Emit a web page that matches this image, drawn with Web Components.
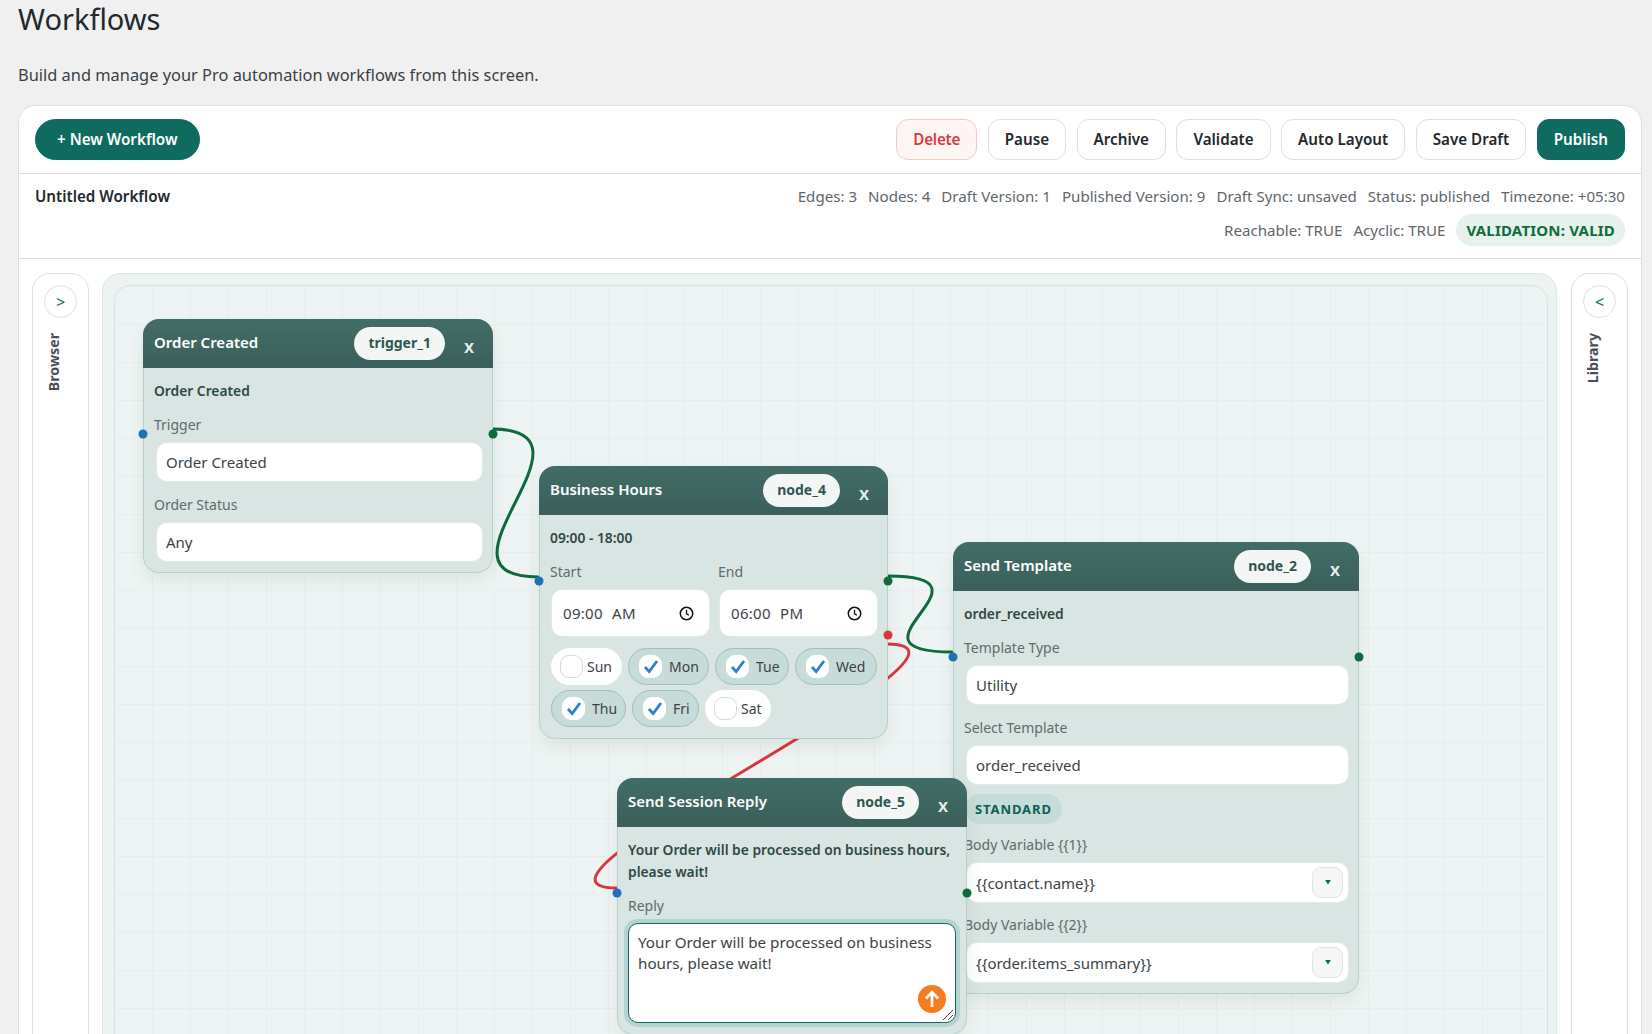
<!DOCTYPE html>
<html lang="en">
<head>
<meta charset="utf-8">
<title>Workflows</title>
<style>
  html, body { margin: 0; height: 100%; overflow: hidden; background: #f0f0f0; }
  body { font-family: "Noto Sans", "Open Sans", sans-serif; color: #23282c; }
</style>
</head>
<body>
<wf-page>
  <wf-card>
    <wf-toolbar>
      <wf-button slot="start" kind="primary" pill>+ New Workflow</wf-button>
      <wf-button kind="danger">Delete</wf-button>
      <wf-button>Pause</wf-button>
      <wf-button>Archive</wf-button>
      <wf-button>Validate</wf-button>
      <wf-button>Auto Layout</wf-button>
      <wf-button>Save Draft</wf-button>
      <wf-button kind="primary">Publish</wf-button>
    </wf-toolbar>
    <wf-meta name="Untitled Workflow">
      <span>Edges: 3</span><span>Nodes: 4</span><span>Draft Version: 1</span><span>Published Version: 9</span><span>Draft Sync: unsaved</span><span>Status: published</span><span>Timezone: +05:30</span>
      <span slot="second">Reachable: TRUE</span><span slot="second">Acyclic: TRUE</span>
      <wf-status slot="second">VALIDATION: VALID</wf-status>
    </wf-meta>
    <wf-workspace>
      <wf-rail slot="left" label="Browser" arrow="&gt;"></wf-rail>
      <wf-canvas>
        <wf-edge x1="377" y1="143" x2="423" y2="291" color="#0f6a3e" bend="120"></wf-edge>
        <wf-edge x1="773" y1="290" x2="837" y2="366" color="#0f6a3e" bend="120"></wf-edge>
        <wf-edge x1="772" y1="358" x2="502" y2="602" color="#d9383e" bend="135"></wf-edge>

        <wf-node heading="Order Created" badge="trigger_1" left="28" top="33" width="350">
          <wf-summary>Order Created</wf-summary>
          <wf-field label="Trigger"><wf-input>Order Created</wf-input></wf-field>
          <wf-field label="Order Status" gap="14"><wf-input>Any</wf-input></wf-field>
        </wf-node>

        <wf-node heading="Business Hours" badge="node_4" left="424" top="180" width="349" error-port="169">
          <wf-summary>09:00 - 18:00</wf-summary>
          <wf-times>
            <wf-field label="Start"><wf-input type="time">09:00 AM</wf-input></wf-field>
            <wf-field label="End"><wf-input type="time">06:00 PM</wf-input></wf-field>
          </wf-times>
          <wf-days>
            <wf-day width="71">Sun</wf-day><wf-day width="81" checked>Mon</wf-day><wf-day width="74" checked>Tue</wf-day><wf-day width="82" checked>Wed</wf-day>
            <wf-day width="75" checked>Thu</wf-day><wf-day width="67" checked>Fri</wf-day><wf-day width="66">Sat</wf-day>
          </wf-days>
        </wf-node>

        <wf-node heading="Send Template" badge="node_2" left="838" top="256" width="406">
          <wf-summary>order_received</wf-summary>
          <wf-field label="Template Type"><wf-input>Utility</wf-input></wf-field>
          <wf-field label="Select Template" gap="14"><wf-input>order_received</wf-input></wf-field>
          <wf-tag>STANDARD</wf-tag>
          <wf-field label="Body Variable {{1}}" gap="11"><wf-input type="select">{{contact.name}}</wf-input></wf-field>
          <wf-field label="Body Variable {{2}}"><wf-input type="select">{{order.items_summary}}</wf-input></wf-field>
        </wf-node>

        <wf-node heading="Send Session Reply" badge="node_5" left="502" top="492" width="350">
          <wf-summary>Your Order will be processed on business hours, please wait!</wf-summary>
          <wf-field label="Reply"><wf-reply>Your Order will be processed on business hours, please wait!</wf-reply></wf-field>
        </wf-node>
      </wf-canvas>
      <wf-rail slot="right" label="Library" arrow="&lt;"></wf-rail>
    </wf-workspace>
  </wf-card>
</wf-page>

<script>
class WfElement extends HTMLElement {
  constructor() {
    super();
    this.attachShadow({ mode: "open" });
  }

  connectedCallback() {
    this.shadowRoot.innerHTML = this.render();
  }
}

class WfPage extends WfElement {
  render() {
    return `
      <style>
        :host { display: block; padding: 0 10px 0 18px; }
        h1 { margin: 0; font-size: 29px; font-weight: 400; line-height: 38px; color: #23282c; }
        p { margin: 0; padding-top: 25px; height: 42px; font-size: 16.4px; line-height: 24px; color: #3b4045; }
      </style>
      <h1>Workflows</h1>
      <p>Build and manage your Pro automation workflows from this screen.</p>
      <slot></slot>
    `;
  }
}

class WfCard extends WfElement {
  render() {
    return `
      <style>
        :host { display: block; background: #fff; border: 1px solid #dedede; border-radius: 18px; box-sizing: border-box; height: 1000px; overflow: hidden; }
      </style>
      <slot></slot>
    `;
  }
}

class WfToolbar extends WfElement {
  render() {
    return `
      <style>
        :host { display: flex; justify-content: space-between; padding: 13px 16px; height: 68px; box-sizing: border-box; border-bottom: 1px solid #dedede; }
        .actions { display: flex; gap: 10.5px; }
      </style>
      <slot name="start"></slot>
      <div class="actions"><slot></slot></div>
    `;
  }
}

class WfButton extends WfElement {
  render() {
    const kind = this.getAttribute("kind") || "plain";
    const colors = {
      plain: "background:#fff;border-color:#dedede;color:#23282c",
      danger: "background:#fff5f5;border-color:#f6c9c9;color:#dc3a3a;letter-spacing:-.2px",
      primary: "background:#0f6b60;border-color:#0f6b60;color:#fff",
    }[kind];
    const pill = this.hasAttribute("pill");
    return `
      <style>
        :host { display: block; }
        button { font: 600 15.2px/1 "Noto Sans", sans-serif; height: 41px; padding: 1px ${pill ? 21 : 16}px 0; border: 1px solid; border-radius: ${pill ? 21 : 12}px; ${colors} }
      </style>
      <button><slot></slot></button>
    `;
  }
}

class WfMeta extends WfElement {
  render() {
    return `
      <style>
        :host { display: flex; justify-content: space-between; height: 85px; box-sizing: border-box; padding: 10px 16px 0; border-bottom: 1px solid #dedede; font-size: 15.1px; color: #60666b; line-height: 24px; }
        strong { font-weight: 600; font-size: 15.2px; color: #23282c; }
        .rows { display: flex; flex-direction: column; gap: 6px; align-items: flex-end; }
        .row { display: flex; gap: 11px; align-items: center; }
      </style>
      <strong>${this.getAttribute("name")}</strong>
      <div class="rows">
        <div class="row"><slot></slot></div>
        <div class="row"><slot name="second"></slot></div>
      </div>
    `;
  }
}

class WfStatus extends WfElement {
  render() {
    return `
      <style>
        :host { display: block; height: 32px; line-height: 32px; padding: 0 10px; border-radius: 16px; background: #e6f1ec; color: #0f6a3e; font-weight: 700; font-size: 15px; letter-spacing: .2px; }
      </style>
      <slot></slot>
    `;
  }
}

class WfWorkspace extends WfElement {
  render() {
    return `
      <style>
        :host { display: flex; gap: 13px; padding: 14px 13px 0; height: 900px; box-sizing: border-box; }
        ::slotted([slot="right"]) { margin-left: 1px; }
      </style>
      <slot name="left"></slot>
      <slot></slot>
      <slot name="right"></slot>
    `;
  }
}

class WfRail extends WfElement {
  render() {
    return `
      <style>
        :host { display: flex; flex-direction: column; align-items: center; flex: 0 0 57px; box-sizing: border-box; border: 1px solid #dedede; border-radius: 18px; padding-top: 11px; }
        button { width: 33px; height: 33px; padding: 0; border-radius: 50%; border: 1px solid #dedede; background: #fff; color: #0f6b60; font: 400 16px/1 "Noto Sans", sans-serif; }
        span { margin-top: 15px; margin-right: 14px; writing-mode: vertical-rl; transform: rotate(180deg); font-size: 14.2px; line-height: 18px; font-weight: 700; color: #4a4f55; }
      </style>
      <button>${this.getAttribute("arrow").replace("<", "&lt;").replace(">", "&gt;")}</button>
      <span>${this.getAttribute("label")}</span>
    `;
  }
}

class WfCanvas extends WfElement {
  render() {
    return `
      <style>
        :host { display: block; flex: 1; min-width: 0; box-sizing: border-box; padding: 11px 8px 0 11px; background: #ecf3f2; border: 1px solid #dfe7e6; border-radius: 18px; }
        .board {
          position: relative; height: 1000px; box-sizing: border-box;
          border: 1px solid #d5e5e2; border-radius: 16px;
          background-color: #eef4f3;
          background-image: linear-gradient(to right, #e7eeed 1px, transparent 1px), linear-gradient(to bottom, #e7eeed 1px, transparent 1px);
          background-size: 38px 38px;
          background-position: -1px 0;
        }
      </style>
      <div class="board"><slot></slot></div>
    `;
  }
}

class WfEdge extends WfElement {
  render() {
    const [x1, y1, x2, y2, bend] = ["x1", "y1", "x2", "y2", "bend"].map((n) => Number(this.getAttribute(n)));
    const d = `M${x1} ${y1} C${x1 + bend} ${y1} ${x2 - bend} ${y2} ${x2} ${y2}`;
    return `
      <style>
        :host { position: absolute; inset: 0; pointer-events: none; }
        svg { width: 100%; height: 100%; overflow: visible; display: block; }
      </style>
      <svg><path d="${d}" fill="none" stroke="${this.getAttribute("color")}" stroke-width="3" stroke-linecap="round"/></svg>
    `;
  }
}

class WfNode extends WfElement {
  render() {
    const get = (n) => this.getAttribute(n);
    const errorPort = get("error-port");
    return `
      <style>
        :host { position: absolute; left: ${get("left")}px; top: ${get("top")}px; width: ${get("width")}px; box-sizing: border-box; background: #d8e5e2; border: 1px solid #b6d0cb; border-radius: 16px; box-shadow: 0 8px 18px rgba(30, 60, 55, .08); }
        header { display: flex; align-items: center; height: 49px; margin: -1px -1px 0; padding: 0 14px 0 11px; border-radius: 16px 16px 0 0; background: linear-gradient(#426d67, #3b5f5a); color: #fff; }
        h3 { margin: 0 0 3px; flex: 1; font-size: 15px; font-weight: 600; }
        .badge { height: 33px; line-height: 32px; padding: 0 14px; border-radius: 17px; background: #f3f6f5; color: #2f5650; font-size: 14px; font-weight: 700; }
        .close { width: 48px; margin-right: -14px; text-align: center; font-size: 18px; font-weight: 600; line-height: 1; color: #e8f0ee; padding-top: 4px; }
        .body { padding: 12px 10px 11px; }
        .port { position: absolute; width: 9px; height: 9px; border-radius: 50%; transform: translate(-50%, -50%); }
        .in { left: -1px; top: 114px; background: #1f6fb9; }
        .out { left: calc(100% + 1px); top: 114px; background: #0f6a3e; }
        .err { left: calc(100% + 1px); background: #d9383e; }
      </style>
      <header><h3>${get("heading")}</h3><span class="badge">${get("badge")}</span><span class="close">x</span></header>
      <div class="body"><slot></slot></div>
      <i class="port in"></i><i class="port out"></i>
      ${errorPort ? `<i class="port err" style="top:${errorPort - 1}px"></i>` : ""}
    `;
  }
}

class WfSummary extends WfElement {
  render() {
    return `
      <style>
        :host { display: block; font-size: 13.8px; font-weight: 600; line-height: 22px; color: #2f4845; }
      </style>
      <slot></slot>
    `;
  }
}

class WfField extends WfElement {
  render() {
    return `
      <style>
        :host { display: block; margin-top: ${this.getAttribute("gap") || 13}px; }
        label { display: block; font-size: 14px; line-height: 20px; color: #5f6b6b; margin-bottom: 8px; white-space: nowrap; }
      </style>
      <label>${this.getAttribute("label")}</label>
      <slot></slot>
    `;
  }
}

class WfInput extends WfElement {
  render() {
    const type = this.getAttribute("type");
    const height = type === "time" ? 46 : type === "select" ? 39 : 38;
    const clock = `<svg class="icon" width="15" height="15" viewBox="0 0 15 15"><circle cx="7.5" cy="7.5" r="6.2" fill="none" stroke="#111" stroke-width="1.5"/><path d="M7.5 3.8v4l2.6 1.5" fill="none" stroke="#111" stroke-width="1.3"/></svg>`;
    const caret = `<span class="caret"><svg width="6" height="5" viewBox="0 0 7 6"><path d="M0 0h7L3.5 5.5z" fill="#0f6b60"/></svg></span>`;
    const tail = type === "time" ? clock : type === "select" ? caret : "";
    const time = type === "time";
    return `
      <style>
        :host { display: flex; align-items: center; justify-content: space-between; box-sizing: border-box; height: ${height}px; margin-left: ${time ? 2 : 3}px; margin-right: ${time ? -1 : 0}px; padding: 0 ${type === "select" ? 5 : time ? 15 : 9}px 0 ${time ? 11 : 9}px; background: #fff; border-radius: 10px; box-shadow: 0 0 0 1px #e2e9e7; font-size: 15px; color: #3c4347; ${time ? "word-spacing: 5px; letter-spacing: .3px;" : ""} }
        .caret { display: flex; align-items: center; justify-content: center; width: 31px; height: 31px; box-sizing: border-box; border: 1px solid #dfe4e3; border-radius: 9px; background: #f5f7f6; }
      </style>
      <span><slot></slot></span>${tail}
    `;
  }
}

class WfTimes extends WfElement {
  render() {
    return `
      <style>
        :host { display: grid; grid-template-columns: 158px 158px; gap: 10px; }
      </style>
      <slot></slot>
    `;
  }
}

class WfDays extends WfElement {
  render() {
    return `
      <style>
        :host { display: flex; flex-wrap: wrap; gap: 5px 6px; margin: 12px 0 0 1px; }
      </style>
      <slot></slot>
    `;
  }
}

class WfDay extends WfElement {
  render() {
    const checked = this.hasAttribute("checked");
    return `
      <style>
        :host { display: flex; align-items: center; gap: ${checked ? 7 : 4}px; width: ${this.getAttribute("width")}px; height: 37px; box-sizing: border-box; padding: 0 0 0 ${checked ? 10 : 8}px; border-radius: 19px; font-size: 14px; color: #3c4347; background: ${checked ? "#c7dbd8" : "#fff"}; border: 1px solid ${checked ? "#9fc1bc" : "#fff"}; }
        .box { display: flex; align-items: center; justify-content: center; flex: none; width: 23px; height: 23px; box-sizing: border-box; border-radius: 9px; background: #fff; border: 1px solid ${checked ? "#fff" : "#d5dcdb"}; }
      </style>
      <span class="box">${checked ? `<svg width="16" height="15" viewBox="0 0 16 15"><path d="M2 8l4.2 4.6L14 2" fill="none" stroke="#2f7fcf" stroke-width="2.8"/></svg>` : ""}</span>
      <slot></slot>
    `;
  }
}

class WfTag extends WfElement {
  render() {
    return `
      <style>
        :host { display: table; height: 30px; line-height: 30px; margin: 10px 0 0 1px; padding: 0 10px; border-radius: 15px; background: #c5dcd8; color: #0d5f55; font-size: 13px; font-weight: 700; letter-spacing: .9px; }
      </style>
      <slot></slot>
    `;
  }
}

class WfReply extends WfElement {
  render() {
    return `
      <style>
        :host { display: block; position: relative; height: 100px; box-sizing: border-box; margin-top: -1px; padding: 8px 9px; background: #fff; border: 1px solid #0f6b60; border-radius: 10px; box-shadow: 0 0 0 4px #b5d3d0; font-size: 15.2px; line-height: 21px; color: #3c4347; }
        .send { position: absolute; right: 9px; bottom: 9px; width: 28px; height: 28px; border-radius: 50%; background: #f57c1f; display: flex; align-items: center; justify-content: center; }
        .grip { position: absolute; right: 1px; bottom: 1px; }
      </style>
      <slot></slot>
      <span class="send"><svg width="16" height="18" viewBox="0 0 14 16"><path d="M7 15V2M1.5 7.5L7 2l5.5 5.5" fill="none" stroke="#fff" stroke-width="2.4"/></svg></span>
      <svg class="grip" width="12" height="12" viewBox="0 0 12 12"><path d="M1 11L11 1M6 11l5-5" stroke="#444" stroke-width="1"/></svg>
    `;
  }
}

customElements.define("wf-page", WfPage);
customElements.define("wf-card", WfCard);
customElements.define("wf-toolbar", WfToolbar);
customElements.define("wf-button", WfButton);
customElements.define("wf-meta", WfMeta);
customElements.define("wf-status", WfStatus);
customElements.define("wf-workspace", WfWorkspace);
customElements.define("wf-rail", WfRail);
customElements.define("wf-canvas", WfCanvas);
customElements.define("wf-edge", WfEdge);
customElements.define("wf-node", WfNode);
customElements.define("wf-summary", WfSummary);
customElements.define("wf-field", WfField);
customElements.define("wf-input", WfInput);
customElements.define("wf-times", WfTimes);
customElements.define("wf-days", WfDays);
customElements.define("wf-day", WfDay);
customElements.define("wf-tag", WfTag);
customElements.define("wf-reply", WfReply);
</script>
</body>
</html>
